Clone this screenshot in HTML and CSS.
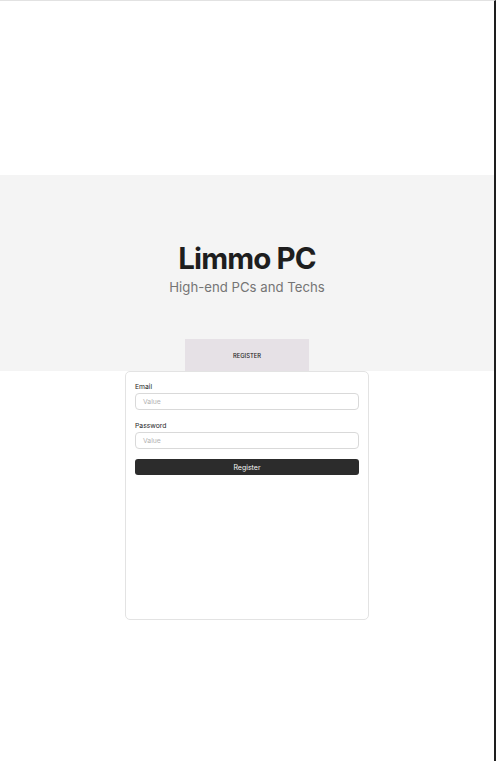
FILE: index.html
```html
<!DOCTYPE html>
<html lang="en">
<head>
<meta charset="utf-8">
<title>Limmo PC</title>
<link rel="stylesheet" href="styles.css">
</head>
<body>
<div class="frame">
  <div class="top-space"></div>
  <section class="hero">
    <div class="hero-text">
      <h1 class="title">Limmo PC</h1>
      <p class="subtitle">High-end PCs and Techs</p>
    </div>
    <div class="tab">REGISTER</div>
  </section>
  <form class="card">
    <label class="label">Email</label>
    <div class="input">Value</div>
    <label class="label">Password</label>
    <div class="input">Value</div>
    <div class="button">Register</div>
  </form>
</div>
</body>
</html>
```

FILE: styles.css
```css
html, body {
  margin: 0;
  padding: 0;
  background: #ffffff;
}
body {
  font-family: Inter, "Noto Sans", sans-serif;
  color: #1e1e1e;
}
.frame {
  box-sizing: border-box;
  width: 496px;
  height: 761px;
  border-top: 1px solid #e2e2e2;
  border-right: 2px solid #1e1e1e;
  display: flex;
  flex-direction: column;
}
.top-space {
  height: 174px;
  flex: none;
}
.hero {
  height: 196px;
  background: #f4f4f4;
  display: flex;
  flex-direction: column;
  align-items: center;
  flex: none;
}
.hero-text {
  display: flex;
  flex-direction: column;
  align-items: center;
  padding-top: 65px;
}
.title {
  margin: 0;
  font-size: 29.5px;
  line-height: 36px;
  font-weight: 700;
  letter-spacing: -0.9px;
  color: #1e1e1e;
}
.subtitle {
  margin: 2px 0 0;
  font-size: 13.2px;
  line-height: 18px;
  font-weight: 400;
  color: #757575;
}
.tab {
  margin-top: auto;
  width: 124px;
  height: 32px;
  background: #e6e1e6;
  display: flex;
  align-items: center;
  justify-content: center;
  font-size: 5.8px;
  font-weight: 500;
  color: #1e1e1e;
}
.card {
  box-sizing: border-box;
  width: 244px;
  height: 249px;
  margin: 0 auto;
  border: 1px solid #e3e3e3;
  border-radius: 5px;
  padding: 9px 9px 0;
  display: flex;
  flex-direction: column;
  background: #ffffff;
}
.label {
  font-size: 6.8px;
  line-height: 11px;
  color: #1e1e1e;
  margin-bottom: 1px;
}
.input {
  box-sizing: border-box;
  height: 17px;
  border: 1px solid #d9d9d9;
  border-radius: 4px;
  padding-left: 7px;
  display: flex;
  align-items: center;
  font-size: 6.8px;
  color: #b3b3b3;
  margin-bottom: 10px;
}
.button {
  height: 16px;
  background: #2c2c2c;
  border-radius: 3px;
  color: #f5f5f5;
  font-size: 7px;
  display: flex;
  align-items: center;
  justify-content: center;
}
```
